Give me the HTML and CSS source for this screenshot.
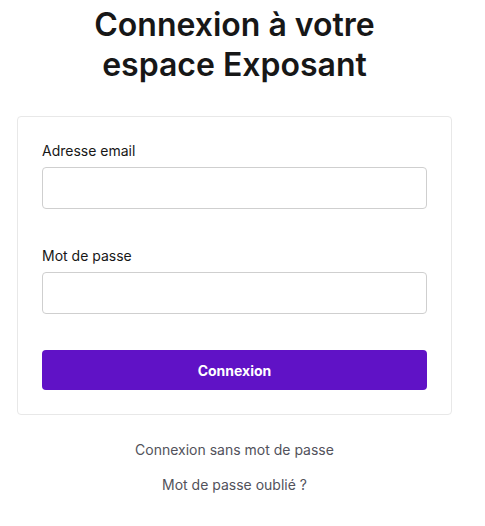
FILE: index.html
```html
<!DOCTYPE html>
<html lang="fr">
<head>
  <meta charset="UTF-8" />
  <meta name="viewport" content="width=device-width, initial-scale=1.0"/>
  <title>Connexion Exposant</title>
  <link rel="stylesheet" href="styles.css">
</head>
<body>
  <main class="page">
    <h1 class="titre">Connexion à votre<br>espace Exposant</h1>

    <form class="carte" onsubmit="return false;">
      <div class="champ">
        <label for="email">Adresse email</label>
        <input type="email" id="email" />
      </div>

      <div class="champ">
        <label for="motdepasse">Mot de passe</label>
        <input type="password" id="motdepasse" />
      </div>

      <button type="submit" class="btn-connexion">Connexion</button>
    </form>

    <div class="liens">
      <a href="#">Connexion sans mot de passe</a>
      <a href="#">Mot de passe oublié ?</a>
    </div>
  </main>
</body>
</html>
```

FILE: styles.css
```css
body {
  font-family: Inter, 'Noto Sans', sans-serif;
  background: #fff;
  color: #171717;
  margin: 0;
}
.page {
  width: 435px;
  margin-left: 17px;
}
.titre {
  font-size: 32px;
  font-weight: 600;
  line-height: 40px;
  text-align: center;
  margin: 5px 0 31px;
  color: #171717;
}
.carte {
  border: 1px solid #e8e8e8;
  border-radius: 4px;
  padding: 24px;
  display: flex;
  flex-direction: column;
  gap: 37px;
}
.champ {
  display: flex;
  flex-direction: column;
  gap: 6px;
}
.champ label {
  font-size: 14px;
  line-height: 20px;
  color: #171717;
}
.champ input {
  height: 42px;
  box-sizing: border-box;
  border: 1px solid #cfcfcf;
  border-radius: 4px;
  padding: 0 12px;
  font: inherit;
}
.btn-connexion {
  height: 40px;
  border: none;
  border-radius: 4px;
  background-color: #6012c6;
  color: #fff;
  font: inherit;
  font-size: 14px;
  font-weight: 700;
  cursor: pointer;
  margin-top: -1px;
}
.liens {
  display: flex;
  flex-direction: column;
  align-items: center;
  gap: 15px;
  margin-top: 25px;
}
.liens a {
  font-size: 14px;
  line-height: 20px;
  color: #52525b;
  text-decoration: none;
}
```
